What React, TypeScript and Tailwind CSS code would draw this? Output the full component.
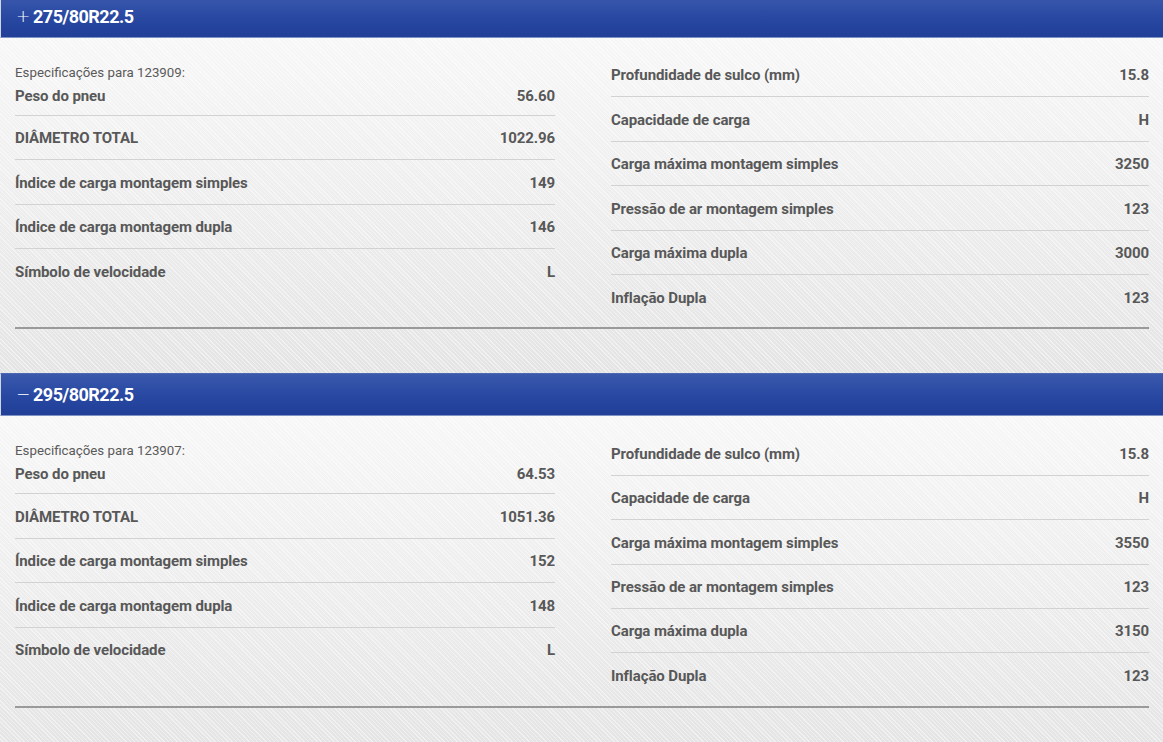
import React from "react";

type Spec = { label: string; value: string };

type Tyre = {
  size: string;
  open: boolean;
  code: string;
  left: Spec[];
  right: Spec[];
};

const tyres: Tyre[] = [
  {
    size: "275/80R22.5",
    open: false,
    code: "123909",
    left: [
      { label: "Peso do pneu", value: "56.60" },
      { label: "DIÂMETRO TOTAL", value: "1022.96" },
      { label: "Índice de carga montagem simples", value: "149" },
      { label: "Índice de carga montagem dupla", value: "146" },
      { label: "Símbolo de velocidade", value: "L" },
    ],
    right: [
      { label: "Profundidade de sulco (mm)", value: "15.8" },
      { label: "Capacidade de carga", value: "H" },
      { label: "Carga máxima montagem simples", value: "3250" },
      { label: "Pressão de ar montagem simples", value: "123" },
      { label: "Carga máxima dupla", value: "3000" },
      { label: "Inflação Dupla", value: "123" },
    ],
  },
  {
    size: "295/80R22.5",
    open: true,
    code: "123907",
    left: [
      { label: "Peso do pneu", value: "64.53" },
      { label: "DIÂMETRO TOTAL", value: "1051.36" },
      { label: "Índice de carga montagem simples", value: "152" },
      { label: "Índice de carga montagem dupla", value: "148" },
      { label: "Símbolo de velocidade", value: "L" },
    ],
    right: [
      { label: "Profundidade de sulco (mm)", value: "15.8" },
      { label: "Capacidade de carga", value: "H" },
      { label: "Carga máxima montagem simples", value: "3550" },
      { label: "Pressão de ar montagem simples", value: "123" },
      { label: "Carga máxima dupla", value: "3150" },
      { label: "Inflação Dupla", value: "123" },
    ],
  },
];

export default function App() {
  return (
    <main className="min-h-screen overflow-hidden bg-[#e6e6e6] font-['Roboto',sans-serif]">
      <div className="-mt-[5px]">
        {tyres.map((t) => (
          <TyreSection key={t.size} tyre={t} />
        ))}
      </div>
    </main>
  );
}

function TyreSection({ tyre }: { tyre: Tyre }) {
  return (
    <section>
      {/* blue accordion header */}
      <div className="h-[43px] flex items-center gap-[6px] pl-[15px] border-l border-[#cfd6ea] border-t border-t-[#4f68b4] border-b border-b-[#7f92c6] bg-[linear-gradient(to_bottom,#3a59ad,#2747a1_55%,#213f97)] text-white">
        <span className="w-[11px] text-[17px] leading-none font-['DejaVu_Sans',sans-serif] font-light">
          {tyre.open ? "−" : "+"}
        </span>
        <span className="text-[18px] font-bold tracking-[-0.5px]">{tyre.size}</span>
      </div>

      {/* specs body with striped texture */}
      <div className="pl-[15px] pr-[14px] pt-[15px] pb-[44px] bg-[repeating-linear-gradient(45deg,rgba(255,255,255,0.45)_0px,rgba(255,255,255,0.45)_1px,transparent_1px,transparent_3px),linear-gradient(to_bottom,#f7f7f7,#e4e4e4)]">
        <div className="grid grid-cols-[540px_1fr] gap-x-[56px]">
          <div>
            <p className="mt-[12px] text-[13.3px] leading-[16px] text-[#5a5a5a]">
              Especificações para {tyre.code}:
            </p>
            {tyre.left.map((s, i) => (
              <Row key={s.label} spec={s} first={i === 0} last={i === tyre.left.length - 1} />
            ))}
          </div>
          <div>
            {tyre.right.map((s, i) => (
              <Row key={s.label} spec={s} last={i === tyre.right.length - 1} />
            ))}
          </div>
        </div>
        <div className="mt-[8px] h-[2px] bg-[#9a9a9a]" />
      </div>
    </section>
  );
}

function Row({ spec, first, last }: { spec: Spec; first?: boolean; last?: boolean }) {
  return (
    <div
      className={[
        "flex items-center justify-between pt-[2px] text-[15px] font-bold tracking-[-0.1px] text-[#585858]",
        first ? "h-[35px] pb-[6px]" : "h-[44.4px]",
        last ? "" : "border-b border-[#d2d2d2]",
      ].join(" ")}
    >
      <span>{spec.label}</span>
      <span>{spec.value}</span>
    </div>
  );
}
